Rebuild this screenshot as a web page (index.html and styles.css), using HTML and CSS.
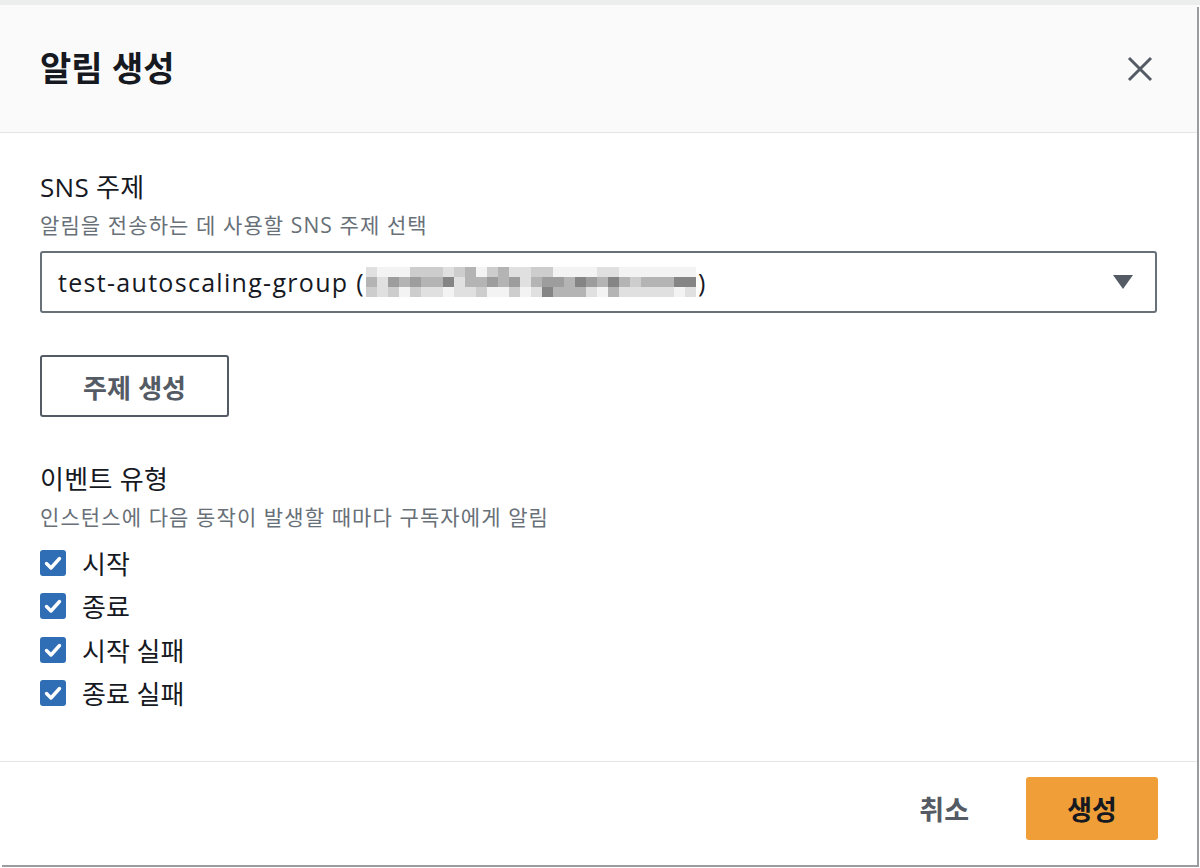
FILE: index.html
```html
<!DOCTYPE html>
<html lang="ko">
<head>
<meta charset="utf-8">
<title>알림 생성</title>
<link rel="stylesheet" href="styles.css">
</head>
<body>
<div class="backdrop-strip"></div>
<div class="modal">
  <header class="modal-header">
    <h1 class="modal-title">알림 생성</h1>
    <button class="close-btn" aria-label="닫기">
      <svg width="26" height="26" viewBox="0 0 26 26"><path d="M2 2 L24 24 M24 2 L2 24" stroke="#545b64" stroke-width="3" fill="none"/></svg>
    </button>
  </header>
  <div class="modal-body">
    <div class="field-label">SNS 주제</div>
    <div class="field-desc">알림을 전송하는 데 사용할 SNS 주제 선택</div>
    <div class="select">
      <span class="select-text">test-autoscaling-group (<span class="blur">
        <i class="b"></i><i class="a"></i><i class="a"></i><i class="a"></i><i class="c"></i><i class="c"></i><i class="c"></i><i class="b"></i><i class="c"></i><i class="d"></i><i class="a"></i><i class="c"></i><i class="d"></i><i class="b"></i><i class="b"></i><i class="c"></i><i class="c"></i><i class="a"></i><i class="a"></i><i class="a"></i><i class="a"></i><i class="b"></i><i class="b"></i><i class="a"></i><i class="a"></i><i class="a"></i><i class="a"></i><i class="a"></i><i class="a"></i><i class="a"></i>
        <i class="d"></i><i class="b"></i><i class="e"></i><i class="d"></i><i class="e"></i><i class="d"></i><i class="d"></i><i class="f"></i><i class="b"></i><i class="d"></i><i class="d"></i><i class="e"></i><i class="d"></i><i class="e"></i><i class="b"></i><i class="d"></i><i class="e"></i><i class="e"></i><i class="d"></i><i class="f"></i><i class="e"></i><i class="d"></i><i class="f"></i><i class="d"></i><i class="c"></i><i class="d"></i><i class="d"></i><i class="d"></i><i class="f"></i><i class="f"></i>
        <i class="c"></i><i class="b"></i><i class="c"></i><i class="a"></i><i class="c"></i><i class="b"></i><i class="b"></i><i class="a"></i><i class="b"></i><i class="b"></i><i class="c"></i><i class="a"></i><i class="a"></i><i class="c"></i><i class="a"></i><i class="b"></i><i class="f"></i><i class="d"></i><i class="d"></i><i class="d"></i><i class="b"></i><i class="a"></i><i class="d"></i><i class="b"></i><i class="b"></i><i class="b"></i><i class="b"></i><i class="b"></i><i class="a"></i><i class="b"></i>
      </span>)</span>
      <svg class="caret" width="20" height="14" viewBox="0 0 20 14"><path d="M0 0 H20 L10 14 Z" fill="#545b64"/></svg>
    </div>
    <button class="btn-normal">주제 생성</button>

    <div class="field-label second">이벤트 유형</div>
    <div class="field-desc">인스턴스에 다음 동작이 발생할 때마다 구독자에게 알림</div>
    <ul class="checks">
      <li><span class="cb"><svg width="26" height="26" viewBox="0 0 26 26"><path d="M6.5 13.5 L11 18 L19.5 8.5" stroke="#fff" stroke-width="3.4" fill="none" stroke-linecap="round" stroke-linejoin="round"/></svg></span>시작</li>
      <li><span class="cb"><svg width="26" height="26" viewBox="0 0 26 26"><path d="M6.5 13.5 L11 18 L19.5 8.5" stroke="#fff" stroke-width="3.4" fill="none" stroke-linecap="round" stroke-linejoin="round"/></svg></span>종료</li>
      <li><span class="cb"><svg width="26" height="26" viewBox="0 0 26 26"><path d="M6.5 13.5 L11 18 L19.5 8.5" stroke="#fff" stroke-width="3.4" fill="none" stroke-linecap="round" stroke-linejoin="round"/></svg></span>시작 실패</li>
      <li><span class="cb"><svg width="26" height="26" viewBox="0 0 26 26"><path d="M6.5 13.5 L11 18 L19.5 8.5" stroke="#fff" stroke-width="3.4" fill="none" stroke-linecap="round" stroke-linejoin="round"/></svg></span>종료 실패</li>
    </ul>
  </div>
  <footer class="modal-footer">
    <button class="btn-link">취소</button>
    <button class="btn-primary">생성</button>
  </footer>
</div>
</body>
</html>
```
FILE: styles.css
```css
html, body {
  margin: 0;
  padding: 0;
}
body {
  width: 1200px;
  height: 868px;
  background: #ffffff;
  font-family: "Open Sans", "Noto Sans CJK KR", sans-serif;
  color: #16191f;
  overflow: hidden;
}
.backdrop-strip {
  height: 5px;
  background: #eceeee;
}
.modal {
  width: 1197px;
  height: 860px;
  background: #ffffff;
  box-shadow: 2px 2px 0 #9a9d9f;
  display: flex;
  flex-direction: column;
}
.modal-header {
  height: 128px;
  background: #fafafa;
  border-bottom: 1px solid #e3e5e6;
  display: flex;
  align-items: center;
  justify-content: space-between;
  padding: 0 44px 0 40px;
  box-sizing: border-box;
}
.modal-title {
  margin: 0;
  font-size: 34px;
  font-weight: 700;
  font-family: "Noto Sans CJK KR", sans-serif;
  line-height: 40px;
  color: #16191f;
  margin-top: -4px;
}
.close-btn {
  background: none;
  border: 0;
  padding: 0;
  width: 26px;
  height: 26px;
  display: flex;
}
.modal-body {
  padding: 38px 40px 0 40px;
  flex: 1;
}
.field-label {
  font-size: 26px;
  line-height: 32px;
  letter-spacing: 0.3px;
}
.field-label.second {
  margin-top: 46px;
}
.field-desc {
  font-size: 21px;
  line-height: 28px;
  letter-spacing: 1.1px;
  color: #687078;
  margin-top: 8px;
}
.select {
  margin-top: 12px;
  height: 62px;
  border: 2px solid #687078;
  border-radius: 3px;
  box-sizing: border-box;
  display: flex;
  align-items: center;
  justify-content: space-between;
  padding: 0 22px 0 16px;
}
.select-text {
  font-size: 25px;
  letter-spacing: 1.3px;
  display: flex;
  align-items: center;
  white-space: pre;
}
.blur {
  display: grid;
  grid-template-columns: repeat(30, 11px);
  grid-auto-rows: 10px;
  margin: 0 2px 0 1px;
}
.blur i { display: block; }
.blur .a { background: #f3f3f3; }
.blur .b { background: #e0e0e0; }
.blur .c { background: #cdcdcd; }
.blur .d { background: #b4b4b4; }
.blur .e { background: #9d9d9d; }
.blur .f { background: #858585; }
.caret {
  display: block;
}
.btn-normal {
  margin-top: 42px;
  width: 189px;
  height: 62px;
  border: 2px solid #545b64;
  border-radius: 3px;
  background: #ffffff;
  color: #545b64;
  font-family: "Noto Sans CJK KR", sans-serif;
  font-size: 26px;
  font-weight: 700;
  display: block;
}
.checks {
  list-style: none;
  margin: 10px 0 0 0;
  padding: 0;
}
.checks li {
  height: 43.5px;
  display: flex;
  align-items: center;
  font-size: 26px;
}
.cb {
  width: 26px;
  height: 26px;
  border-radius: 3px;
  background: #2f6db5;
  margin-right: 16px;
  display: flex;
}
.modal-footer {
  border-top: 1px solid #e3e5e6;
  height: 104px;
  box-sizing: border-box;
  display: flex;
  justify-content: flex-end;
  align-items: flex-start;
  padding: 15px 39px 0 0;
  gap: 57px;
}
.btn-link {
  background: none;
  border: 0;
  height: 63px;
  padding: 0;
  font-family: "Noto Sans CJK KR", sans-serif;
  font-size: 27px;
  font-weight: 700;
  color: #545b64;
}
.btn-primary {
  width: 132px;
  height: 63px;
  border: 0;
  border-radius: 3px;
  background: #f09f38;
  font-family: "Noto Sans CJK KR", sans-serif;
  font-size: 27px;
  font-weight: 700;
  color: #16191f;
}
```
